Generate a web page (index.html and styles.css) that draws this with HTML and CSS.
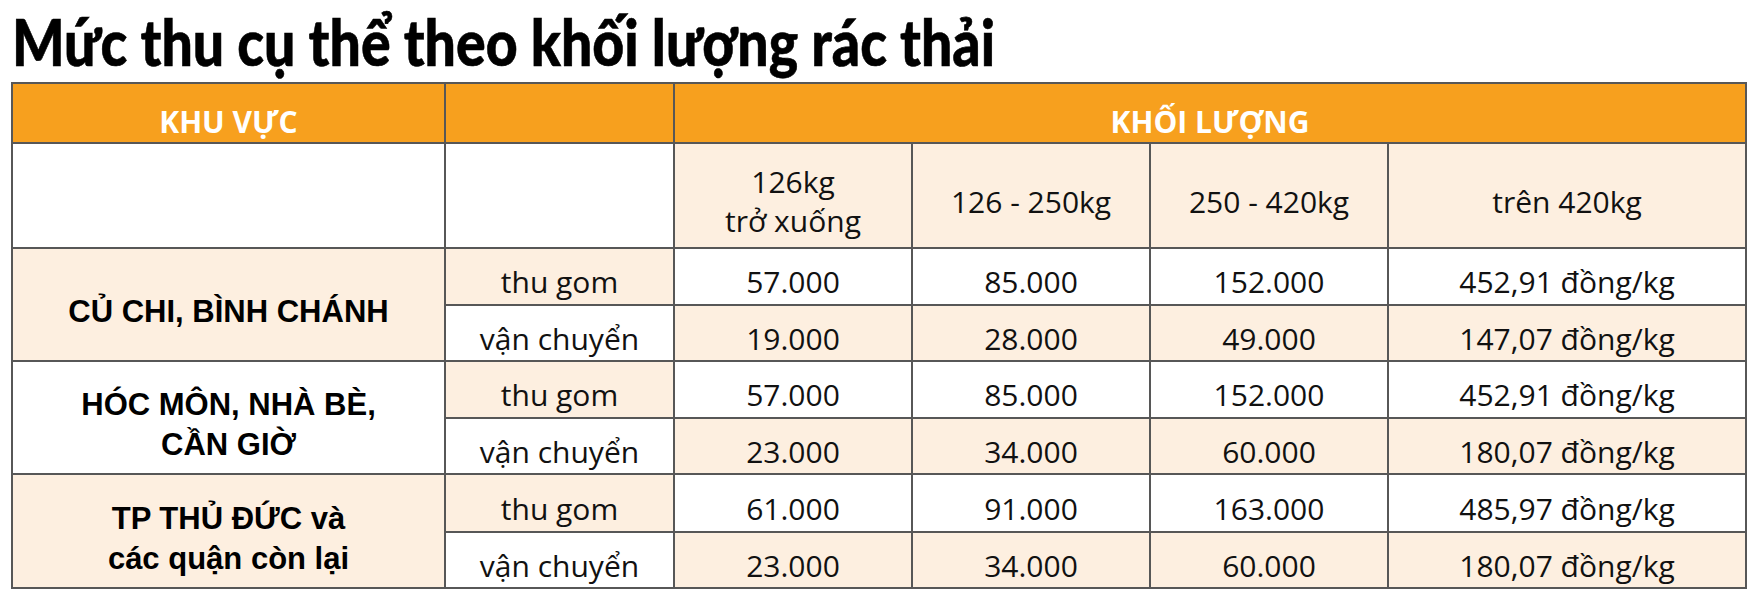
FILE: index.html
```html
<!DOCTYPE html>
<html lang="vi">
<head>
<meta charset="utf-8">
<title>Mức thu cụ thể theo khối lượng rác thải</title>
<link rel="stylesheet" href="styles.css">
</head>
<body>
<div class="page">
  <h1 class="title"><span class="title-text">Mức thu cụ thể theo khối lượng rác thải</span></h1>
  <table class="fees">
    <colgroup>
      <col class="c-area"><col class="c-type"><col class="c-w"><col class="c-w"><col class="c-w"><col class="c-last">
    </colgroup>
    <thead>
      <tr class="r-head">
        <th>KHU VỰC</th>
        <th></th>
        <th colspan="4">KHỐI LƯỢNG</th>
      </tr>
      <tr class="r-sub">
        <td></td>
        <td></td>
        <td class="cream">126kg<br>trở xuống</td>
        <td class="cream">126 - 250kg</td>
        <td class="cream">250 - 420kg</td>
        <td class="cream">trên 420kg</td>
      </tr>
    </thead>
    <tbody>
      <tr class="r-data">
        <td class="area cream" rowspan="2">CỦ CHI, BÌNH CHÁNH</td>
        <td class="cream">thu gom</td>
        <td>57.000</td><td>85.000</td><td>152.000</td><td>452,91 đồng/kg</td>
      </tr>
      <tr class="r-data r-alt">
        <td>vận chuyển</td>
        <td class="cream">19.000</td><td class="cream">28.000</td><td class="cream">49.000</td><td class="cream">147,07 đồng/kg</td>
      </tr>
      <tr class="r-data">
        <td class="area" rowspan="2">HÓC MÔN, NHÀ BÈ,<br>CẦN GIỜ</td>
        <td class="cream">thu gom</td>
        <td>57.000</td><td>85.000</td><td>152.000</td><td>452,91 đồng/kg</td>
      </tr>
      <tr class="r-data r-alt">
        <td>vận chuyển</td>
        <td class="cream">23.000</td><td class="cream">34.000</td><td class="cream">60.000</td><td class="cream">180,07 đồng/kg</td>
      </tr>
      <tr class="r-data r-tall">
        <td class="area cream" rowspan="2">TP THỦ ĐỨC và<br>các quận còn lại</td>
        <td class="cream">thu gom</td>
        <td>61.000</td><td>91.000</td><td>163.000</td><td>485,97 đồng/kg</td>
      </tr>
      <tr class="r-data r-alt">
        <td>vận chuyển</td>
        <td class="cream">23.000</td><td class="cream">34.000</td><td class="cream">60.000</td><td class="cream">180,07 đồng/kg</td>
      </tr>
    </tbody>
  </table>
</div>
</body>
</html>
```

FILE: styles.css
```css
html, body {
  margin: 0;
  padding: 0;
  background: #ffffff;
}

.page {
  padding: 11px 0 0 11px;
}

.title {
  margin: 0;
  height: 62px;
  padding-left: 1px;
  font-family: Lato, "Open Sans", sans-serif;
  font-weight: 900;
  font-size: 64px;
  line-height: 61px;
  color: #000;
  white-space: nowrap;
}

.title-text {
  display: inline-block;
  transform: scaleX(0.865);
  transform-origin: 0 50%;
  -webkit-text-stroke: 0.6px #000;
}

.fees {
  margin-top: 9px;
  border-collapse: collapse;
  table-layout: fixed;
  width: 1736px;
  font-family: "Open Sans", "Noto Sans", sans-serif;
  font-size: 30px;
  line-height: 39px;
  color: #111;
}

.c-area { width: 433px; }
.c-type { width: 229px; }
.c-w { width: 238px; }
.c-last { width: 358px; }

.fees th,
.fees td {
  border: 2px solid #575757;
  text-align: center;
  vertical-align: middle;
  padding: 10px 2px 0;
  background: #ffffff;
  white-space: nowrap;
}

.fees .cream {
  background: #fdefe0;
}

.r-head {
  height: 60px;
}

.r-head th {
  background: #f7a01e;
  color: #ffffff;
  font-weight: 700;
  padding-top: 16px;
}

.r-sub {
  height: 105px;
}

.r-sub td {
  padding-top: 11px;
}

.r-data {
  height: 57px;
}

.r-alt {
  height: 56px;
}

.r-tall {
  height: 58px;
}

.fees td.area {
  font-family: "Liberation Sans", Arial, sans-serif;
  font-weight: 700;
  font-size: 31px;
  line-height: 40px;
  color: #000;
  padding-top: 15px;
}
```
